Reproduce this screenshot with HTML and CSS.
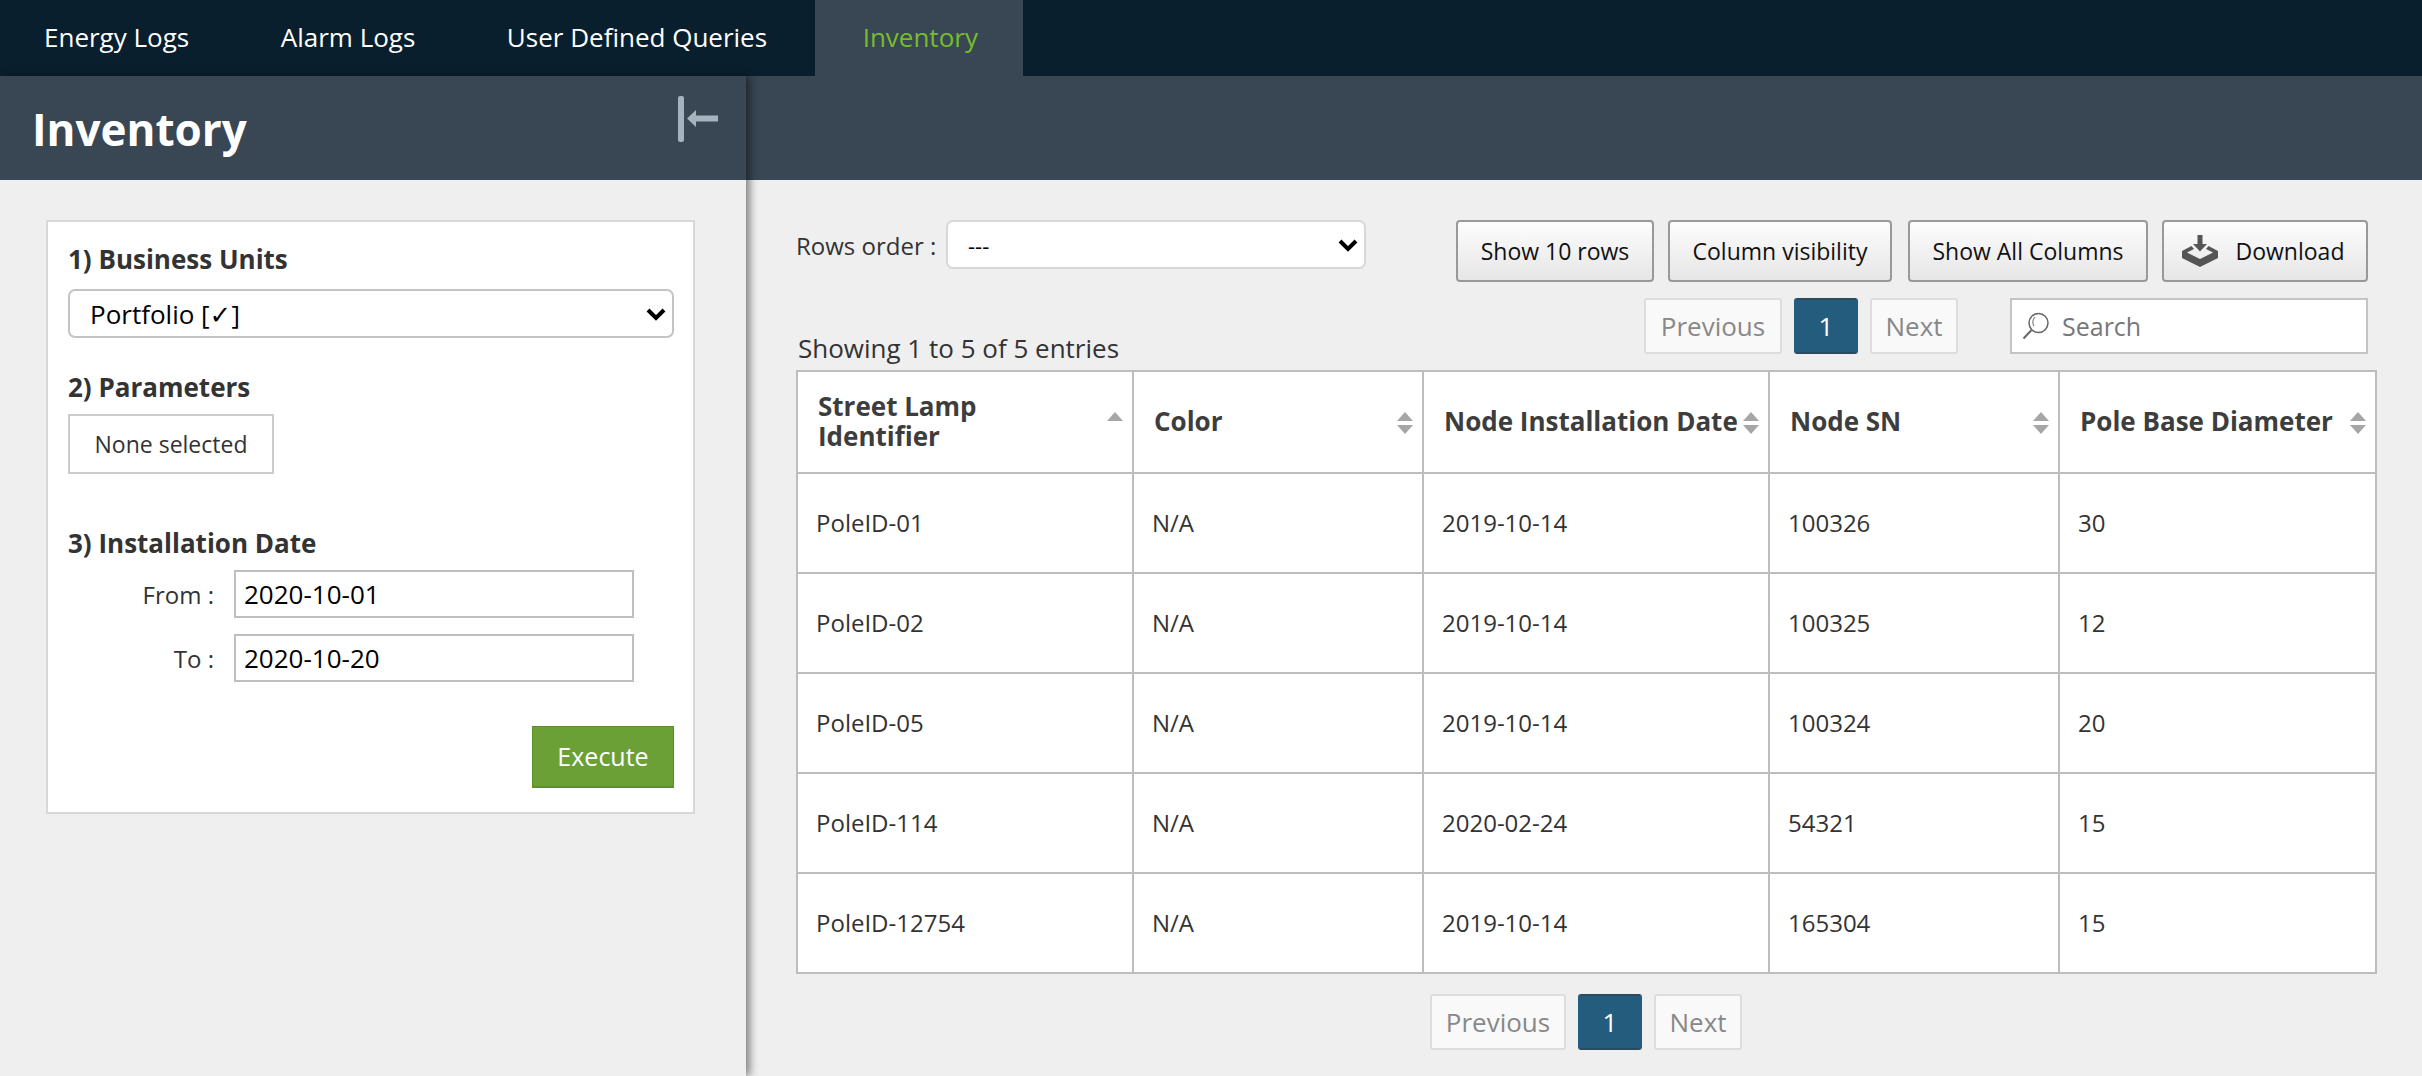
FILE: index.html
```html
<!DOCTYPE html>
<html lang="en">
<head>
<meta charset="utf-8">
<title>Inventory</title>
<link rel="stylesheet" href="styles.css">
</head>
<body>
<nav class="topnav">
  <a class="tab">Energy Logs</a>
  <a class="tab">Alarm Logs</a>
  <a class="tab">User Defined Queries</a>
  <a class="tab tab-active">Inventory</a>
</nav>
<div class="layout">
  <aside class="sidebar">
    <header class="side-head">
      <h1 class="side-title">Inventory</h1>
      <svg class="collapse-icon" width="42" height="46" viewBox="0 0 42 46"><rect x="0" y="0" width="6" height="46" rx="2" fill="#a5b3bf"/><path d="M9 22.500 L18 14 V19.500 H40 V25.500 H18 V31 Z" fill="#a5b3bf"/></svg>
    </header>
    <form class="panel">
      <h2 class="field-title first">1) Business Units</h2>
      <div class="select-wrap unit-select">
        <select class="select"><option>Portfolio [✓]</option></select>
        <svg class="chevron" width="20" height="14" viewBox="0 0 20 14"><path d="M2 3 L10 11 L18 3" fill="none" stroke="#000" stroke-width="4"/></svg>
      </div>
      <h2 class="field-title">2) Parameters</h2>
      <button type="button" class="none-btn">None selected</button>
      <h2 class="field-title date-title">3) Installation Date</h2>
      <div class="date-row"><label class="date-label">From :</label><input class="date-input" value="2020-10-01"></div>
      <div class="date-row"><label class="date-label">To :</label><input class="date-input" value="2020-10-20"></div>
      <div class="actions"><button type="button" class="exec-btn">Execute</button></div>
    </form>
  </aside>
  <main class="content">
    <div class="content-head"></div>
    <div class="content-body">
      <div class="toolbar">
        <div class="order">
          <span class="order-label">Rows order :</span>
          <div class="select-wrap order-select">
            <select class="select select-sm"><option>---</option></select>
            <svg class="chevron" width="20" height="14" viewBox="0 0 20 14"><path d="M2 3 L10 11 L18 3" fill="none" stroke="#000" stroke-width="4"/></svg>
          </div>
        </div>
        <div class="buttons">
          <button type="button" class="tool-btn w-rows">Show 10 rows</button>
          <button type="button" class="tool-btn w-vis">Column visibility</button>
          <button type="button" class="tool-btn w-all">Show All Columns</button>
          <button type="button" class="tool-btn w-dl">
            <svg class="dl-icon" width="36" height="32" viewBox="0 0 36 32"><path d="M15.500 0 H20.500 V9 H25 L18 16.500 L11 9 H15.500 Z" fill="#555"/><path d="M9.500 11 L12 14 L5 17.500 L18 24 L31 17.500 L24 14 L26.500 11 L36 16 V23 L18 32 L0 23 V16 Z" fill="#555"/></svg>
            Download
          </button>
        </div>
      </div>
      <div class="pager-row">
        <div class="pager">
          <a class="page-btn p-prev">Previous</a>
          <a class="page-btn page-cur">1</a>
          <a class="page-btn p-next">Next</a>
        </div>
        <div class="search">
          <svg class="search-icon" width="28" height="28" viewBox="0 0 28 28"><circle cx="16.500" cy="11" r="9.500" fill="none" stroke="#666" stroke-width="1.500"/><path d="M13 5 A7 7 0 0 0 12 14" fill="none" stroke="#666" stroke-width="1"/><path d="M9.500 18 L1.500 26.500" fill="none" stroke="#666" stroke-width="2"/></svg>
          <input class="search-input" placeholder="Search">
        </div>
      </div>
      <div class="info">Showing 1 to 5 of 5 entries</div>
      <table class="grid">
        <colgroup><col class="c1"><col class="c2"><col class="c3"><col class="c4"><col class="c5"></colgroup>
        <thead>
          <tr>
            <th><div class="th-in"><span>Street Lamp<br>Identifier</span><svg class="sort" width="16" height="22" viewBox="0 0 16 22"><path d="M8 0 L16 9 H0 Z" fill="#a6a6a6"/></svg></div></th>
            <th><div class="th-in"><span>Color</span><svg class="sort" width="16" height="22" viewBox="0 0 16 22"><path d="M8 0 L16 9 H0 Z M0 13 H16 L8 22 Z" fill="#a6a6a6"/></svg></div></th>
            <th><div class="th-in"><span>Node Installation Date</span><svg class="sort" width="16" height="22" viewBox="0 0 16 22"><path d="M8 0 L16 9 H0 Z M0 13 H16 L8 22 Z" fill="#a6a6a6"/></svg></div></th>
            <th><div class="th-in"><span>Node SN</span><svg class="sort" width="16" height="22" viewBox="0 0 16 22"><path d="M8 0 L16 9 H0 Z M0 13 H16 L8 22 Z" fill="#a6a6a6"/></svg></div></th>
            <th><div class="th-in"><span>Pole Base Diameter</span><svg class="sort" width="16" height="22" viewBox="0 0 16 22"><path d="M8 0 L16 9 H0 Z M0 13 H16 L8 22 Z" fill="#a6a6a6"/></svg></div></th>
          </tr>
        </thead>
        <tbody>
          <tr><td>PoleID-01</td><td>N/A</td><td>2019-10-14</td><td>100326</td><td>30</td></tr>
          <tr><td>PoleID-02</td><td>N/A</td><td>2019-10-14</td><td>100325</td><td>12</td></tr>
          <tr><td>PoleID-05</td><td>N/A</td><td>2019-10-14</td><td>100324</td><td>20</td></tr>
          <tr><td>PoleID-114</td><td>N/A</td><td>2020-02-24</td><td>54321</td><td>15</td></tr>
          <tr><td>PoleID-12754</td><td>N/A</td><td>2019-10-14</td><td>165304</td><td>15</td></tr>
        </tbody>
      </table>
      <div class="pager pager-bottom">
        <a class="page-btn p-prev p-prev-sm">Previous</a>
        <a class="page-btn page-cur">1</a>
        <a class="page-btn p-next">Next</a>
      </div>
    </div>
  </main>
</div>
</body>
</html>
```

FILE: styles.css
```css
* { box-sizing: border-box; }
html, body { margin: 0; height: 100%; overflow: hidden; }
body { background: #efefef; color: #333; font-family: "Open Sans", "DejaVu Sans", sans-serif; font-size: 24px; }

.topnav { display: flex; height: 76px; background: #0a1f2d; }
.tab { display: flex; align-items: center; padding: 0 47.5px 3px 44px; color: #fff; font-size: 26px; }
.tab-active { width: 208px; padding: 0 0 3px 48px; background: #394654; color: #76bd2c; }

.layout { display: flex; height: 1000px; }
.sidebar { position: relative; z-index: 2; width: 746px; flex: none; height: 100%; background: #efefef; box-shadow: 4px 0 8px rgba(0,0,0,.45); }
.side-head { position: relative; height: 104px; background: #394654; padding: 25px 0 0 32px; }
.side-title { margin: 0; color: #fff; font-size: 44px; line-height: 56px; font-weight: 700; }
.collapse-icon { position: absolute; left: 678px; top: 20px; }

.panel { width: 649px; height: 594px; margin: 40px 0 0 46px; padding: 20px 19px 0 20px; background: #fff; border: 2px solid #d8d8d8; }
.field-title { margin: 32px 0 0; font-size: 26px; line-height: 34px; font-weight: 700; color: #333; }
.field-title.first { margin-top: 0; }
.select-wrap { position: relative; }
.chevron { position: absolute; right: 8px; top: 18px; pointer-events: none; }
.select { appearance: none; display: block; width: 100%; height: 100%; padding: 0 0 0 20px; background: #fff; border: 2px solid #c4c4c4; border-radius: 7px; font: 26px "Open Sans", "DejaVu Sans", sans-serif; color: #000; }
.unit-select { width: 606px; height: 49px; margin-top: 13px; }
.none-btn { display: block; width: 206px; height: 60px; margin-top: 10px; padding: 0; background: #fff; border: 2px solid #ccc; font: 23px "Open Sans", sans-serif; color: #333; }
.date-title { margin-top: 52px; }
.date-row { display: flex; align-items: center; height: 48px; margin-top: 16px; }
.date-title + .date-row { margin-top: 10px; }
.date-label { width: 146px; text-align: right; font-size: 24px; color: #333; }
.date-input { width: 400px; height: 48px; margin-left: 20px; padding: 0 8px; border: 2px solid #bfbfbf; font: 26px "Open Sans", sans-serif; color: #000; background: #fff; }
.actions { display: flex; justify-content: flex-end; margin-top: 44px; }
.exec-btn { width: 142px; height: 62px; padding: 0 0 2px; background: #6ba036; border: 1px solid #5d8f2d; border-bottom: 2px solid #5d8f2d; color: #fff; font: 25px "Open Sans", sans-serif; }

.content { flex: 1; min-width: 0; }
.content-head { height: 104px; background: #394654; }
.content-body { padding: 40px 46px 0 50px; }
.toolbar { display: flex; justify-content: space-between; height: 62px; }
.order { display: flex; align-items: flex-start; }
.order-label { font-size: 24px; line-height: 52px; color: #333; width: 150px; }
.order-select { width: 420px; height: 49px; }
.select-sm { border-color: #d8d8d8; font-size: 22px; }
.buttons { display: flex; margin-right: 8px; }
.tool-btn { display: flex; align-items: center; justify-content: center; height: 62px; margin-left: 14px; padding: 0; background: linear-gradient(#fdfdfd, #e6e6e6); border: 2px solid #999; border-radius: 4px; color: #111; font: 23px "Open Sans", sans-serif; }
.w-rows { width: 198px; }
.w-vis { width: 224px; }
.w-all { width: 240px; margin-left: 16px; }
.w-dl { width: 206px; padding-right: 4px; }
.dl-icon { margin-right: 18px; }

.pager-row { display: flex; justify-content: flex-end; align-items: flex-start; height: 56px; margin-top: 16px; margin-right: 8px; }
.pager { display: flex; }
.page-btn { display: flex; align-items: center; justify-content: center; height: 56px; border: 2px solid #ddd; border-radius: 3px; background: #f9f9f9; color: #888; font-size: 26px; }
.p-prev { width: 138px; }
.p-prev-sm { width: 136px; }
.p-next { width: 88px; margin-left: 12px; }
.page-cur { width: 64px; margin-left: 12px; background: #245c7e; border-color: #245c7e #245c7e #2c4a60; border-top-color: #2c4a60; color: #fff; }
.search { position: relative; width: 358px; height: 56px; margin-left: 52px; }
.search-icon { position: absolute; left: 12px; top: 14px; }
.search-input { width: 100%; height: 100%; padding: 0 0 0 50px; border: 2px solid #c4c4c4; background: #fff; font: 25px "Open Sans", sans-serif; color: #333; }
.search-input::placeholder { color: #777; opacity: 1; }

.info { height: 37px; margin-top: -21px; padding-left: 2px; font-size: 26px; line-height: 30px; color: #333; }
.grid { width: 1579px; border-collapse: collapse; table-layout: fixed; background: #fff; }
.c1 { width: 336px; }
.c2 { width: 290px; }
.c3 { width: 346px; }
.c4 { width: 290px; }
.c5 { width: 317px; }
.grid th, .grid td { border: 2px solid #bdbdbd; text-align: left; }
.grid th { height: 102px; padding: 0 9px 3px 20px; font-size: 26px; line-height: 30px; font-weight: 700; color: #3d3d3d; }
.grid td { height: 100px; padding: 0 0 2px 18px; font-size: 24px; color: #333; }
.th-in { display: flex; align-items: center; justify-content: space-between; }
.sort { flex: none; margin-top: 4px; }
.pager-bottom { justify-content: flex-start; margin: 20px 0 0 634px; }
```
